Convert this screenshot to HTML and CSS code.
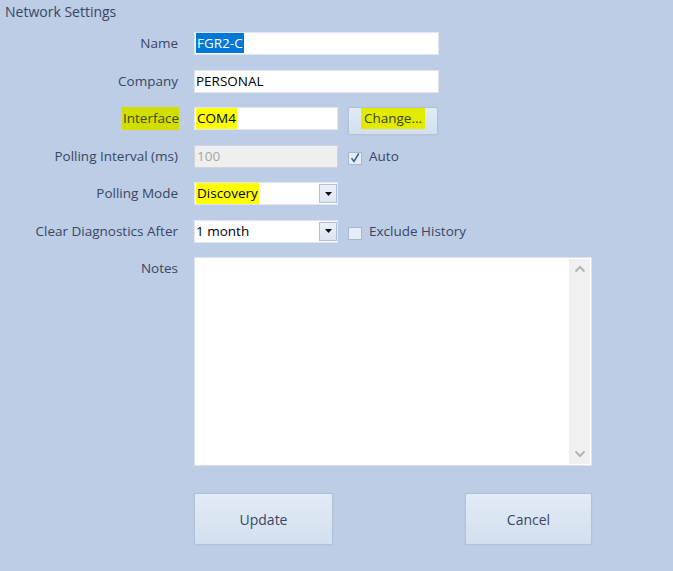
FILE: index.html
```html
<!DOCTYPE html>
<html>
<head>
<meta charset="utf-8">
<link rel="stylesheet" href="styles.css">
</head>
<body>
<div class="title">Network Settings</div>
<div class="form">
  <div class="label">Name</div>
  <div class="field"><div class="input wide"><span class="sel">FGR2-C</span></div></div>

  <div class="label">Company</div>
  <div class="field"><div class="input wide">PERSONAL</div></div>

  <div class="label"><span class="hl-label">Interface</span></div>
  <div class="field">
    <div class="input short"><span class="hl">COM4</span></div>
    <div class="btn change"><span class="hl-btn">Change...</span></div>
  </div>

  <div class="label">Polling Interval (ms)</div>
  <div class="field">
    <div class="input short disabled">100</div>
    <div class="check-wrap">
      <span class="checkbox">
        <svg width="12" height="12" viewBox="0 0 12 12"><path d="M2.5 6.2 L5 9.5 L9.8 1.5" fill="none" stroke="#3a5f9a" stroke-width="1.5"/></svg>
      </span>
      <span class="check-text">Auto</span>
    </div>
  </div>

  <div class="label">Polling Mode</div>
  <div class="field">
    <div class="input short select"><span class="hl">Discovery</span>
      <span class="drop"><svg width="7" height="4" viewBox="0 0 7 4"><path d="M0 0 H7 L3.5 4 Z" fill="#111"/></svg></span>
    </div>
  </div>

  <div class="label">Clear Diagnostics After</div>
  <div class="field">
    <div class="input short select">1 month
      <span class="drop"><svg width="7" height="4" viewBox="0 0 7 4"><path d="M0 0 H7 L3.5 4 Z" fill="#111"/></svg></span>
    </div>
    <div class="check-wrap">
      <span class="checkbox"></span>
      <span class="check-text">Exclude History</span>
    </div>
  </div>

  <div class="label">Notes</div>
  <div class="field">
    <div class="notes">
      <div class="scroll">
        <svg width="12" height="8" viewBox="0 0 12 8"><path d="M1.5 6.5 L6 2 L10.5 6.5" fill="none" stroke="#b4b4b4" stroke-width="2"/></svg>
        <svg width="12" height="8" viewBox="0 0 12 8"><path d="M1.5 1.5 L6 6 L10.5 1.5" fill="none" stroke="#b4b4b4" stroke-width="2"/></svg>
      </div>
    </div>
  </div>
</div>
<div class="actions">
  <div class="btn big update">Update</div>
  <div class="btn big cancel">Cancel</div>
</div>
</body>
</html>
```
FILE: styles.css
```css
html, body {
  margin: 0;
  padding: 0;
}
body {
  width: 673px;
  height: 571px;
  background: #bccde5;
  font-family: "Open Sans", "Noto Sans", sans-serif;
  font-size: 13.5px;
  color: #3a4664;
  overflow: hidden;
}
.title {
  padding: 3px 0 0 5px;
  height: 17px;
  line-height: 17px;
  font-size: 14px;
  color: #3a4664;
}
.form {
  display: grid;
  grid-template-columns: 178px 420px;
  grid-template-rows: repeat(6, 23px) 209px;
  column-gap: 16px;
  row-gap: 14.5px;
  margin-top: 12px;
}
.label {
  text-align: right;
  line-height: 23px;
  height: 23px;
  white-space: nowrap;
}
.hl-label {
  display: inline-block;
  background: #d2de00;
  color: #3a4a10;
  padding: 0 0 0 1px;
  margin-right: -1px;
}
.field {
  display: flex;
  align-items: flex-start;
  gap: 10px;
}
.input {
  box-sizing: border-box;
  height: 23px;
  background: #fff;
  border: 1px solid #dfe6ef;
  color: #000;
  line-height: 21px;
  padding-left: 1px;
  position: relative;
  white-space: nowrap;
}
.wide { width: 245px; }
.short { width: 144px; }
.sel {
  display: inline-block;
  background: #0078d7;
  color: #fff;
  line-height: 20px;
  padding: 0 1px;
}
.hl {
  display: inline-block;
  background: #ffff00;
  line-height: 21px;
  padding: 0 1px;
}
.disabled {
  background: #efefef;
  border-color: #cfd4da;
  color: #a6a6a6;
  padding-left: 2px;
}
.select .drop {
  position: absolute;
  right: 0;
  top: 1px;
  width: 18px;
  height: 19px;
  box-sizing: border-box;
  border: 1px solid #b3c1d6;
  background: linear-gradient(#eaf0f8, #dce6f3);
  display: flex;
  align-items: center;
  justify-content: center;
}
.btn {
  box-sizing: border-box;
  border: 1px solid #b2c2d8;
  border-radius: 2px;
  background: linear-gradient(#e2ebf7, #d3dfee);
  color: #3a4664;
  display: flex;
  align-items: center;
  justify-content: center;
  box-shadow: 0 0 1px rgba(120,140,170,0.4);
}
.change {
  width: 90px;
  height: 28px;
}
.hl-btn {
  background: #e2ea00;
  color: #3a4510;
  line-height: 21px;
  padding: 0 3px;
  margin-top: -5px;
}
.check-wrap {
  display: flex;
  align-items: center;
  height: 23px;
  gap: 7px;
}
.checkbox {
  box-sizing: border-box;
  width: 14px;
  height: 13px;
  border: 1px solid #a9b7cb;
  background: #e6edf6;
  display: flex;
  align-items: center;
  justify-content: center;
  margin-top: 4px;
}
.check-text {
  color: #3a4664;
  line-height: 23px;
}
.notes {
  box-sizing: border-box;
  width: 398px;
  height: 209px;
  background: #fff;
  border: 1px solid #dbe2ec;
  display: flex;
  justify-content: flex-end;
  padding: 1px 1px 1px 0;
}
.scroll {
  width: 21px;
  background: #f0f0f0;
  display: flex;
  flex-direction: column;
  justify-content: space-between;
  align-items: center;
  padding: 6px 0 6px;
}
.actions {
  display: flex;
  justify-content: space-between;
  width: 398px;
  margin: 27px 0 0 194px;
}
.big {
  height: 52px;
  font-size: 14px;
}
.update { width: 139px; }
.cancel { width: 127px; }
```
